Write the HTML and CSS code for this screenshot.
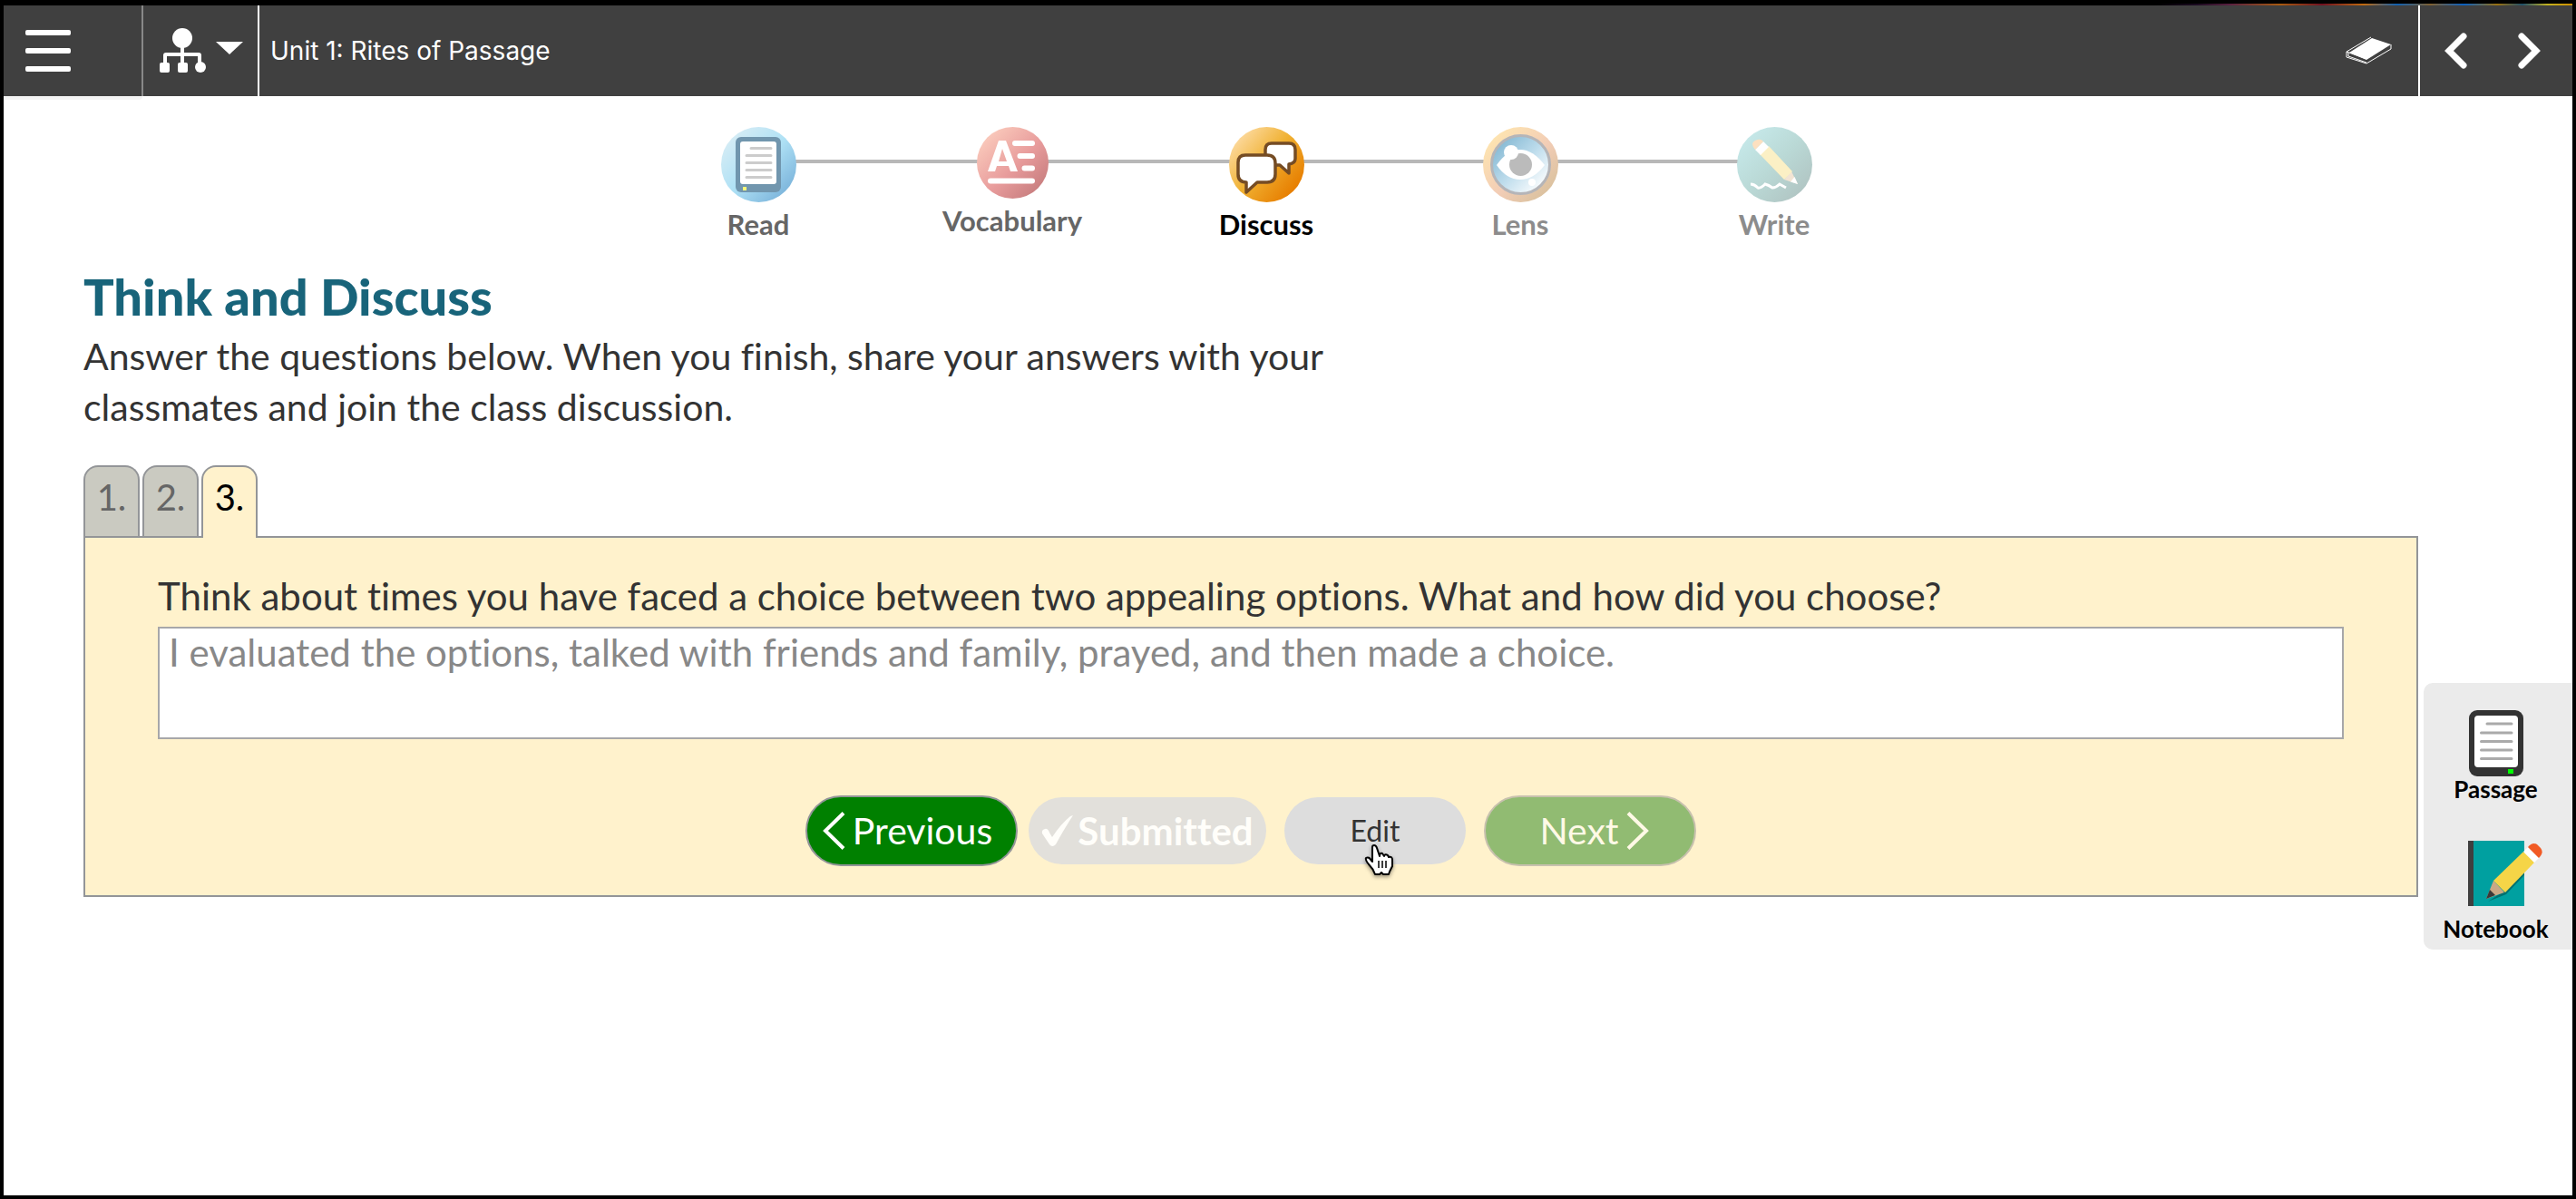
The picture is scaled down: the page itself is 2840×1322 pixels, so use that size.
FILE: index.html
```html
<!DOCTYPE html>
<html lang="en">
<head>
<meta charset="utf-8">
<title>Unit 1: Rites of Passage</title>
<link rel="stylesheet" href="styles.css">
</head>
<body>
<div class="strip"></div>
<header class="topbar">
  <button class="bar-btn menu-btn" aria-label="Menu">
    <svg width="50" height="46" viewBox="0 0 50 46" fill="#fff"><rect width="50" height="6" rx="2"/><rect y="20" width="50" height="6" rx="2"/><rect y="40" width="50" height="6" rx="2"/></svg>
  </button>
  <button class="bar-btn map-btn" aria-label="Unit map">
    <svg width="94" height="50" viewBox="0 0 94 50" fill="#fff"><circle cx="25" cy="11" r="11"/><path d="M25 20v20M6 42V30q0-1 1-1h36q1 0 1 1v12" fill="none" stroke="#fff" stroke-width="4"/><rect y="38" width="11" height="11" rx="2"/><rect x="20" y="38" width="11" height="11" rx="2"/><circle cx="45" cy="43" r="6"/><path d="M62 15h30L77 29z"/></svg>
  </button>
  <h1 class="unit">Unit 1: Rites of Passage</h1>
  <button class="bar-btn eraser-btn" aria-label="Eraser">
    <svg width="52" height="32" viewBox="0 0 52 32"><path d="M29 2 50 9 23 26 4 18z" fill="#fff"/><path d="M28 1 1 17v6l22 7 27-16V9M1 17l22 8M3 18v4l20 7" fill="none" stroke="#fff" stroke-width="1"/></svg>
  </button>
  <div class="pager">
    <button class="bar-btn" aria-label="Previous page"><svg width="24" height="40" viewBox="0 0 24 40"><path d="M20 4 4 20l16 16" fill="none" stroke="#fff" stroke-width="7" stroke-linecap="round"/></svg></button>
    <button class="bar-btn" aria-label="Next page"><svg width="24" height="40" viewBox="0 0 24 40"><path d="m4 4 16 16L4 36" fill="none" stroke="#fff" stroke-width="7" stroke-linecap="round"/></svg></button>
  </div>
</header>
<div class="menu-edge"></div>

<nav class="steps" aria-label="Lesson steps">
  <a class="step read" href="#read">
    <svg width="83" height="83" viewBox="0 0 83 83"><defs><linearGradient id="g1" x1="0.1" y1="0.1" x2="0.9" y2="0.9"><stop offset="0" stop-color="#d8edf5"/><stop offset=".5" stop-color="#afe1f5"/><stop offset="1" stop-color="#79b2da"/></linearGradient></defs><circle cx="41.500" cy="41.500" r="41.500" fill="url(#g1)"/><rect x="16" y="11" width="50" height="61" rx="6" fill="#7196ae"/><rect x="21" y="16" width="40" height="47" rx="3" fill="#fff"/><path d="M33 23.500h22M28 31.500h27M28 39.500h27M28 47.500h27M28 55.500h27" stroke="#ccc" stroke-width="3" stroke-linecap="round"/><rect x="24" y="66" width="4" height="4" fill="#fafa7a"/></svg>
    <span>Read</span>
  </a>
  <a class="step vocab" href="#vocabulary">
    <svg width="79" height="79" viewBox="0 0 79 79"><defs><linearGradient id="g2" x1="0.1" y1="0.1" x2="0.9" y2="0.9"><stop offset="0" stop-color="#fbccbd"/><stop offset=".55" stop-color="#e89c9c"/><stop offset="1" stop-color="#c67c7d"/></linearGradient></defs><circle cx="39.500" cy="39.500" r="39.500" fill="url(#g2)"/><path fill="#fff" fill-rule="evenodd" d="M12 49 24 15h8l13 34h-8l-2-6H22l-2 6zM24 38h9l-5-14z"/><path d="M42 18h19M47.500 32H61M52.500 45.500H61M15 59.500h46" stroke="#fff" stroke-width="6" stroke-linecap="round"/></svg>
    <span>Vocabulary</span>
  </a>
  <a class="step discuss" href="#discuss" aria-current="step">
    <svg width="83" height="83" viewBox="0 0 83 83"><defs><linearGradient id="g3" x1="0.1" y1="0.1" x2="0.9" y2="0.8"><stop offset="0" stop-color="#fddca5"/><stop offset=".5" stop-color="#f0b132"/><stop offset="1" stop-color="#e77e00"/></linearGradient></defs><circle cx="41.500" cy="41.500" r="41.500" fill="url(#g3)"/><g fill="#fff" stroke="#754c24" stroke-width="3.500" stroke-linejoin="round"><path d="M47 18h19q7 0 7 7v10q0 5-7 6v10L56 42h-9q-7 0-7-7V25q0-7 7-7z"/><path d="M18 31h24q9 0 9 9v12q0 9-9 9H31L19 72V61q-9 0-9-9V39q0-8 8-8z"/></g></svg>
    <span>Discuss</span>
  </a>
  <a class="step lens" href="#lens">
    <svg width="83" height="83" viewBox="0 0 83 83"><defs><linearGradient id="g4" x1="0.1" y1="0.1" x2="0.9" y2="0.9"><stop offset="0" stop-color="#ffe6b0"/><stop offset=".55" stop-color="#f2cdb6"/><stop offset="1" stop-color="#d8c09c"/></linearGradient><linearGradient id="g5" x1="0.1" y1="0.1" x2="0.9" y2="0.9"><stop offset="0" stop-color="#82b7d2"/><stop offset=".5" stop-color="#bddcec"/><stop offset="1" stop-color="#fff"/></linearGradient></defs><circle cx="41.500" cy="41.500" r="41.500" fill="url(#g4)"/><circle cx="41.500" cy="41.500" r="32" fill="url(#g5)" stroke="#b5b5b8" stroke-width="3"/><path d="M15 42q12-17 26-17t27 17Q56 58 41 58T15 42z" fill="#fff"/><circle cx="41.500" cy="41.500" r="12.500" fill="#bbb"/><circle cx="31" cy="28" r="8" fill="#fff"/><circle cx="54" cy="61" r="4" fill="#fff"/></svg>
    <span>Lens</span>
  </a>
  <a class="step write" href="#write">
    <svg width="83" height="83" viewBox="0 0 83 83"><defs><linearGradient id="g6" x1="0.1" y1="0.1" x2="0.9" y2="0.9"><stop offset="0" stop-color="#c6e9ea"/><stop offset=".5" stop-color="#bad9d6"/><stop offset="1" stop-color="#b0c4c2"/></linearGradient></defs><circle cx="41.500" cy="41.500" r="41.500" fill="url(#g6)"/><path d="m60 49 7 14-15-5z" fill="#f2e4d4"/><path d="m63.500 55 3.500 8-8-2.500z" fill="#fff"/><path d="m35 21 26 28-9 9-27-28z" fill="#fbf0c5"/><path d="m29 16 6 6-9 9-6-6z" fill="#fff"/><path d="M20 25q-6-7 0-10t9 1z" fill="#fde0c0"/><path d="M15 63q4 0 8 4 3 1 8-4 4 1 8 4 4 0 8-4l7 4" fill="none" stroke="#fff" stroke-width="3"/></svg>
    <span>Write</span>
  </a>
</nav>

<div class="lesson">
  <main class="content">
    <h2>Think and Discuss</h2>
    <p class="intro">Answer the questions below. When you finish, share your answers with your classmates and join the class discussion.</p>
    <div class="tabs" role="tablist">
      <button class="tab" role="tab">1.</button>
      <button class="tab" role="tab">2.</button>
      <button class="tab active" role="tab" aria-selected="true">3.</button>
    </div>
    <section class="panel">
      <label for="answer">Think about times you have faced a choice between two appealing options. What and how did you choose?</label>
      <textarea id="answer" readonly>I evaluated the options, talked with friends and family, prayed, and then made a choice.</textarea>
      <div class="actions">
        <button class="pill nav-pill prev"><svg width="26" height="42" viewBox="0 0 26 42"><path d="M24 1.500 4 21l20 19.500" fill="none" stroke="#fff" stroke-width="4"/></svg>Previous</button>
        <button class="pill submitted"><svg width="36" height="34" viewBox="0 0 36 34"><path d="M35 0Q24 17 16 32q-4 4-7 0L1 20q-1-4 3-5 3-1 5 4l3 5Q22 9 32 1z" fill="#fffefa"/></svg>Submitted</button>
        <button class="pill edit">Edit
          <svg class="cursor" width="34" height="38" viewBox="0 0 34 38"><path d="M9 20V4q0-2 2-2 2 0 3 3l3 9q0-4 3-3l2 3q1-3 4-1l1 2q4-1 4 3v7l-3 6-1 3h-6l-2-2-2 2h-5q-2-6-7-11-4-5-3-7 3-2 6 3z" fill="#fff" stroke="#000" stroke-width="2" stroke-linejoin="round"/><path d="M16 19v8M20 19v8M24 19v8" stroke="#000" stroke-width="1.500"/></svg>
        </button>
        <button class="pill nav-pill next">Next<svg width="26" height="42" viewBox="0 0 26 42"><path d="m2 1.500 20 19.500-20 19.500" fill="none" stroke="#fff9e6" stroke-width="4"/></svg></button>
      </div>
    </section>
  </main>
  <aside class="tools">
    <button class="tool">
      <svg width="84" height="73" viewBox="0 0 84 73"><rect x="12" width="60" height="73" rx="9" fill="#333"/><rect x="18" y="6" width="48" height="57" rx="4" fill="#fff"/><path d="M32 15h27M25.500 25H59M25.500 34.500H59M25.500 44H59M25.500 53.500H59" stroke="#aaa" stroke-width="3" stroke-linecap="round"/><rect x="55" y="65" width="6" height="5" fill="#0f0"/></svg>
      <span>Passage</span>
    </button>
    <button class="tool notebook">
      <svg width="84" height="72" viewBox="0 0 84 72"><path d="M12 0h61v72H12z" fill="#00a0a0"/><path d="M11 0h6v72h-6z" fill="#3f3f3f"/><path d="m33 67 20-8 20-21v-5L50 56z" fill="#007070"/><path d="m39 44 12 13-20 7z" fill="#c9a886"/><path d="m35 54 6 6-10 4z" fill="#3b3838"/><path d="m72 12 12 12-32 33-13-13z" fill="#f5d547"/><path d="m77 7 12 12-5 5-12-12z" fill="#fff"/><path d="m77 7q5-6 10-3l4 4q4 5-2 11z" fill="#f15a24"/></svg>
      <span>Notebook</span>
    </button>
  </aside>
</div>
</body>
</html>
```
FILE: styles.css
```css
* { box-sizing: border-box; }
body {
  margin: 0;
  min-height: 100vh;
  border: 4px solid #000;
  background: #fff;
  color: #333;
  font-family: Lato, sans-serif;
  font-size: 40px;
  font-variant-ligatures: none;
}
button { font: inherit; font-variant-ligatures: none; border: 0; cursor: pointer; }
svg { display: block; flex: none; overflow: visible; }

.strip {
  height: 2px;
  background:
    linear-gradient(90deg, #000, #1a0a20 10%, #5a2040 18%, #a85a10 30%, #701020 40%, #c06a10 50%, #1060b0 58%, #806030 66%, #0a60c0 74%, #9a7010 82%, #20506a 88%, #c0b020 94%, #d09000)
    right / 460px 2px no-repeat #000;
}
.topbar {
  display: flex;
  height: 100px;
  background: #404040;
  color: #fff;
}
.bar-btn {
  display: flex;
  align-items: center;
  padding: 0;
  background: none;
}
.menu-btn { width: 154px; padding-left: 24px; border-right: 2px solid #888; }
.map-btn { width: 128px; padding-left: 18px; border-right: 2px solid #fff; }
.unit {
  flex: 1;
  margin: 0;
  padding-left: 12px;
  font: 400 28px/100px Inter, sans-serif;
}
.eraser-btn { padding-right: 28px; }
.pager {
  display: flex;
  gap: 56px;
  padding: 0 36px 0 28px;
  border-left: 2px solid #fff;
}
.menu-edge {
  width: 153px;
  height: 4px;
  border-radius: 0 0 4px 0;
  background: #f4f4f4;
}

.steps {
  display: flex;
  align-items: flex-start;
  justify-content: center;
  margin: 30px 48px 0 0;
  background: linear-gradient(#b8b8b8, #b8b8b8) center 36px / 1120px 4px no-repeat;
}
.step {
  display: flex;
  flex-direction: column;
  align-items: center;
  gap: 6px;
  width: 280px;
  color: #666;
  font-size: 31px;
  font-weight: 700;
  line-height: 36px;
  text-decoration: none;
}
.discuss { color: #000; }
.lens, .write { color: #8c8c8c; }

.lesson { display: flex; align-items: flex-start; gap: 6px; }
.content { flex: 1; padding: 30px 0 0 88px; }
h2 {
  margin: 0 0 6px;
  color: #18647a;
  font-size: 56px;
  font-weight: 900;
  line-height: 64px;
}
.intro { max-width: 1400px; margin: 0 0 36px; font-size: 41px; line-height: 56px; }

.tabs { display: flex; gap: 3px; }
.tab {
  width: 62px;
  height: 78px;
  padding: 0 0 10px;
  border: 2px solid #939598;
  border-bottom: 0;
  border-radius: 16px 16px 0 0;
  background: #cacac1;
  color: #666;
}
.tab.active {
  position: relative;
  height: 80px;
  margin-bottom: -2px;
  padding-bottom: 12px;
  background: #fff2cc;
  color: #000;
}
.panel {
  display: flex;
  flex-direction: column;
  padding: 40px 80px 32px;
  border: 2px solid #939598;
  background: #fff2cc;
  font-size: 42px;
  line-height: 48px;
}
textarea {
  height: 124px;
  margin: 10px 0 62px;
  padding: 2px 10px;
  border: 2px solid #a7a7a9;
  border-radius: 0;
  outline: 0;
  background: #fff;
  color: #888;
  font: inherit;
  font-variant-ligatures: none;
  resize: none;
}
.actions {
  display: flex;
  align-items: center;
  justify-content: center;
  gap: 12px;
}
.pill {
  display: flex;
  align-items: center;
  justify-content: center;
  height: 74px;
  padding: 0;
  border-radius: 37px;
}
.nav-pill {
  gap: 8px;
  width: 234px;
  height: 78px;
  border: 2px solid #939598;
  border-radius: 39px;
  background: #008000;
  color: #fff;
  font-size: 41px;
}
.prev { padding-right: 10px; }
.next { padding-left: 10px; border-color: #c8c1ae; background: #91bb72; color: #fff9e6; }
.submitted { gap: 4px; width: 262px; background: #e2e0db; color: #fffefa; font-weight: 700; }
.edit {
  position: relative;
  width: 200px;
  margin: 0 8px;
  background: #ddd;
  color: #333;
  font-size: 32px;
}
.cursor { position: absolute; left: 88px; top: 51px; filter: drop-shadow(0 2px 2px #0006); }

.tools {
  display: flex;
  flex-direction: column;
  gap: 43px;
  width: 164px;
  margin-top: 488px;
  padding: 30px 5px 9px 0;
  border-radius: 10px 0 0 10px;
  background: #ebebeb;
}
.tool {
  display: flex;
  flex-direction: column;
  align-items: center;
  padding: 0;
  background: none;
  color: #000;
  font-size: 26px;
  font-weight: 700;
  line-height: 28px;
}
.notebook { gap: 11px; }
```
